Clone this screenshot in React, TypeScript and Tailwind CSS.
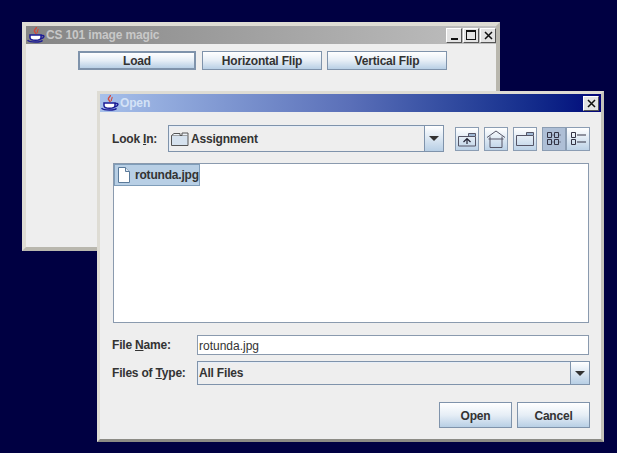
const Cup = () => (
  <svg width="18" height="16" viewBox="0 0 18 16" className="shrink-0">
    <path d="M9 0c1.500 1.500-2.500 2.500-1.500 4.500.4.900 1.500 1.300 1.700 2.500" fill="none" stroke="#d24a3c" strokeWidth="1.400" />
    <path d="M11 2c.8 1.400-1.500 2.200-.5 4" fill="none" stroke="#d24a3c" strokeWidth="1.100" />
    <path d="M3 8h11v2.500c0 1.800-2.300 2.800-5.500 2.800S3 12.300 3 10.500z" fill="#fff" stroke="#1c1c96" strokeWidth="1.500" />
    <path d="M14 8.500h2c1.500 0 1.500 2.500-2 3.300" fill="none" stroke="#1c1c96" strokeWidth="1.400" />
    <path d="M.5 13.300c2.500 2.300 13.500 2.300 15 0" fill="none" stroke="#1c1c96" strokeWidth="1.500" />
  </svg>
);

const Arrow = () => (
  <svg width="10" height="5" viewBox="0 0 10 5"><path d="M0 0h10L5 5z" fill="#333" /></svg>
);

const jbtn = "flex items-center justify-center border border-[#7f93ab] bg-gradient-to-b from-[#ffffff] via-[#e6eef6] to-[#b8cfe5] text-[12px] font-bold tracking-[-0.2px] text-[#333]";

const WinBtn = ({ children }: { children: React.ReactNode }) => (
  <div className="flex h-[15px] w-[16px] items-center justify-center border border-t-[#fff] border-l-[#fff] border-b-[#555] border-r-[#555] bg-[#e3e3e3]">
    {children}
  </div>
);

const CloseIcon = () => (
  <svg width="9" height="9" viewBox="0 0 9 9"><path d="M1 1l7 7M8 1L1 8" stroke="#111" strokeWidth="1.500" /></svg>
);

const ToolBtn = ({ children, active }: { children: React.ReactNode; active?: boolean }) => (
  <div className={`flex h-[24px] w-[24px] items-center justify-center border border-[#8b9db3] ${active ? "bg-[#aebfd6]" : "bg-gradient-to-b from-[#ffffff] to-[#bcd2e7]"}`}>
    {children}
  </div>
);

const Combo = ({ children, className }: { children: React.ReactNode; className: string }) => (
  <div className={`flex border border-[#7f93ab] bg-[#eeeeee] shadow-[inset_0_1px_0_#e6eef8,inset_1px_0_0_#e6eef8] ${className}`}>
    <div className="flex min-w-0 flex-1 items-center text-[12px] font-bold tracking-[-0.2px] text-[#333]">{children}</div>
    <div className="flex w-[19px] items-center justify-center border-l border-[#7f93ab] bg-gradient-to-b from-[#ffffff] to-[#b8cfe5]">
      <Arrow />
    </div>
  </div>
);

const Label = ({ before, u, after, className }: { before: string; u: string; after: string; className: string }) => (
  <span className={`text-[12px] font-bold tracking-[-0.2px] text-[#333] ${className}`}>
    {before}<span className="underline">{u}</span>{after}
  </span>
);

export default function App() {
  return (
    <div className="relative h-[453px] w-[617px] overflow-hidden bg-[#000042] font-['Liberation_Sans',sans-serif]">
      {/* main window */}
      <div className="absolute left-[22px] top-[22px] flex h-[229px] w-[478px] flex-col border-[4px] border-[#dedcd4] border-r-[#b9b7ae] border-b-[#b9b7ae] bg-[#eeeeee]">
        <div className="flex h-[18px] items-center bg-gradient-to-r from-[#858585] to-[#c0c0c0] pl-[1px]">
          <Cup />
          <span className="ml-[1px] text-[12px] font-bold tracking-[-0.15px] text-[#c8c8c8]">CS 101 image magic</span>
          <div className="ml-auto flex gap-[1px]">
            <WinBtn><div className="mt-[8px] h-[2px] w-[7px] bg-[#111]" /></WinBtn>
            <WinBtn><div className="h-[10px] w-[10px] border border-t-[2px] border-[#111]" /></WinBtn>
            <WinBtn><CloseIcon /></WinBtn>
          </div>
        </div>
        <div className="flex gap-[5px] pl-[52px] pt-[7px]">
          <div className={`${jbtn} h-[19px] w-[118px] border-2 border-[#7f9db9]`}>Load</div>
          <div className={`${jbtn} ml-[1px] h-[19px] w-[120px]`}>Horizontal Flip</div>
          <div className={`${jbtn} h-[19px] w-[120px]`}>Vertical Flip</div>
        </div>
      </div>

      {/* dialog */}
      <div className="absolute left-[97px] top-[91px] flex h-[351px] w-[507px] flex-col border-[3px] border-[#dedcd4] border-r-[#c4c2ba] border-b-[#8c8b85] bg-[#eeeeee]">
        <div className="flex h-[18px] items-center bg-gradient-to-r from-[#a7c0ea] via-[#5a6fb8] to-[#04047a] pl-[1px] pr-[2px]">
          <Cup />
          <span className="ml-[1px] text-[12px] font-bold tracking-[-0.15px] text-[#d4e2f6]">Open</span>
          <div className="ml-auto"><WinBtn><CloseIcon /></WinBtn></div>
        </div>
        <div className="flex flex-1 flex-col pl-[13px] pr-[11px] pt-[13px]">
          <div className="flex items-center">
            <Label before="Look " u="I" after="n:" className="-ml-[1px] w-[56px]" />
            <Combo className="h-[27px] w-[276px]">
              <svg width="18" height="14" viewBox="0 0 18 14" className="ml-[2px] mr-[2px] shrink-0">
                <path d="M.5 3.500h16.500v10H.5z" fill="#d6e2ee" stroke="#555" />
                <path d="M.5 3.500L3 1.500h6V3.500M11 3.500V1h6v2.500" fill="#eef3f8" stroke="#555" />
              </svg>
              Assignment
            </Combo>
            <div className="ml-[11px] flex">
              <ToolBtn>
                <svg width="20" height="16" viewBox="0 0 20 16"><path d="M1.500 5.500h17v9.500h-17z" fill="none" stroke="#556" /><path d="M11.500 5V2.500h7V5" fill="#9fb8d4" stroke="#556" /><path d="M10 13V8M6.500 11l3.500-3.500 3.500 3.500" fill="none" stroke="#223" strokeWidth="1.200" /></svg>
              </ToolBtn>
              <div className="ml-[5px]"><ToolBtn>
                <svg width="20" height="18" viewBox="0 0 20 18"><path d="M1 7.500L10 1l9 6.500M4 6.500v11h12v-11M2.500 9h15" fill="none" stroke="#556" /></svg>
              </ToolBtn></div>
              <div className="ml-[5px]"><ToolBtn>
                <svg width="20" height="15" viewBox="0 0 20 15"><path d="M1.500 4.500h17v10h-17z" fill="none" stroke="#556" /><path d="M11.500 4V1.500h7V4" fill="#9fb8d4" stroke="#556" /></svg>
              </ToolBtn></div>
              <div className="ml-[5px]"><ToolBtn active>
                <svg width="14" height="13" viewBox="0 0 14 13"><path d="M.5.500h4v5h-4zM7.500.500h4v5h-4zM.5 7.500h4v5h-4zM7.500 7.500h4v5h-4z" fill="none" stroke="#334" /><path d="M5.500 3h1M12.500 3h1M5.500 10h1M12.500 10h1" stroke="#334" /></svg>
              </ToolBtn></div>
              <ToolBtn>
                <svg width="15" height="13" viewBox="0 0 15 13"><path d="M.5.500h4v5h-4zM.5 7.500h4v5h-4z" fill="none" stroke="#334" /><path d="M6 3h9M6 10h9" stroke="#334" /></svg>
              </ToolBtn>
            </div>
          </div>

          <div className="mt-[11px] h-[160px] w-[476px] border border-[#8a9aae] bg-white">
            <div className="flex h-[22px] w-[86px] items-center border border-[#7f9db9] bg-[#b8cfe5] pl-[2px] text-[12px] font-bold tracking-[-0.2px] text-[#333]">
              <svg width="14" height="16" viewBox="0 0 14 16" className="mr-[4px] shrink-0"><path d="M1.500.5h7l4 4v11h-11z" fill="#fff" stroke="#5a7a9a" /><path d="M8.500.5v4h4" fill="#dfe9f3" stroke="#5a7a9a" /></svg>
              rotunda.jpg
            </div>
          </div>

          <div className="mt-[12px] flex items-center">
            <Label before="File " u="N" after="ame:" className="-ml-[1px] w-[85px]" />
            <div className="flex h-[20px] w-[392px] items-center border border-[#8a9aae] bg-white pl-[1px] pt-[1px] text-[12px] text-[#333]">rotunda.jpg</div>
          </div>
          <div className="mt-[6px] flex items-center">
            <Label before="Files of " u="T" after="ype:" className="-ml-[1px] w-[85px]" />
            <Combo className="h-[24px] w-[393px]"><span className="pl-[1px]">All Files</span></Combo>
          </div>
          <div className="mt-[17px] flex w-[477px] justify-end gap-[5px]">
            <div className={`${jbtn} h-[26px] w-[73px] pt-[1px]`}>Open</div>
            <div className={`${jbtn} h-[26px] w-[73px] pt-[1px]`}>Cancel</div>
          </div>
        </div>
      </div>
    </div>
  );
}
